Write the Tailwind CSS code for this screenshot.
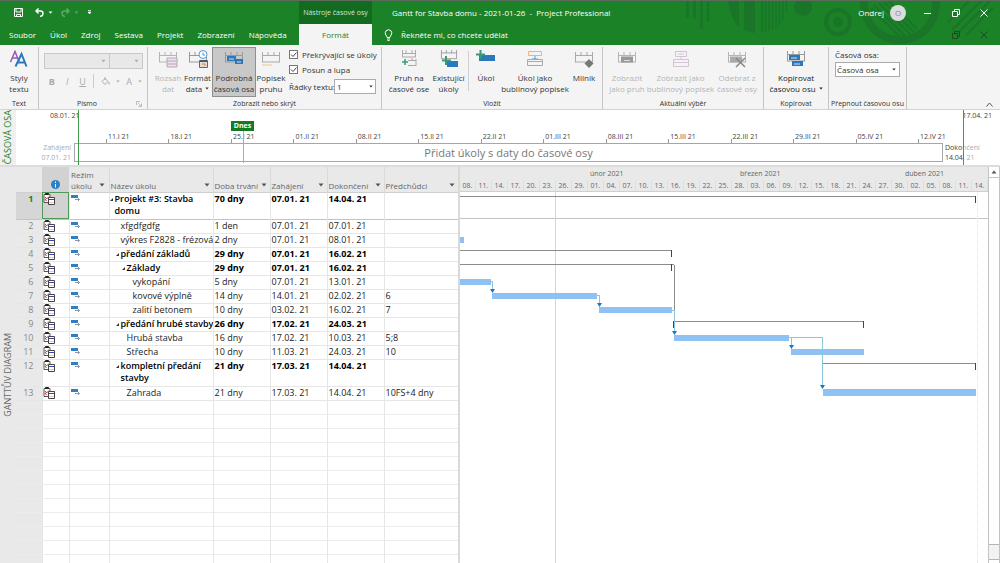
<!DOCTYPE html>
<html lang="cs">
<head>
  <meta charset="UTF-8" />
  <meta name="viewport" content="width=device-width, initial-scale=1.0" />
  <title>Gantt for Stavba domu - 2021-01-26 - Project Professional</title>
  <script src="https://cdn.jsdelivr.net/npm/@tailwindcss/browser@4"></script>
</head>
<body class="h-screen flex flex-col overflow-hidden bg-white font-['Open_Sans',sans-serif] text-[8px] leading-[11px] text-[#333]">

  <!-- shared icons -->
  <svg class="hidden">
    <symbol id="caret" viewBox="0 0 6 4"><path d="M0.5 0.5h5L3 3.5z" fill="currentColor" /></symbol>
    <symbol id="rail" viewBox="0 0 20 18">
      <path d="M1.500 2v10M7 2v4M13 2v4M18.500 2v10M1 5.500h18M1 12h18" fill="none" stroke="currentColor" />
    </symbol>
    <symbol id="indicator" viewBox="0 0 12 12">
      <path d="M1 1.500h6v8H1z" fill="#fff" stroke="#555" />
      <path d="M2.500 0.500h3v1h-3z" fill="#222" stroke="#222" />
      <path d="M2 4l1.500 2L6 3.500M2 6l1.500 2" fill="none" stroke="#c8324a" />
      <path d="M5.500 4.500h6v7h-6z" fill="#fff" stroke="#444" />
      <path d="M6 6.500h5" stroke="#3a44b0" />
      <path d="M6 9.500h5" stroke="#e3c9cc" />
    </symbol>
    <symbol id="mode" viewBox="0 0 10 8">
      <path d="M0 0h7v3H0z" fill="#2f7fc4" />
      <path d="M4 4.500h4.500M7 3l1.500 1.500L7 6" fill="none" stroke="#8c98a8" />
    </symbol>
  </svg>

  <header class="relative bg-[#1b8228] border-t border-[#5d6b5f] text-white">
    <svg class="absolute right-0 top-0 text-[#1a7529]" width="325" height="43" viewBox="0 1 325 43" fill="none" stroke="currentColor">
      <path d="M12.500 1v17M19.500 1v18M26.500 1v28M33 1v20" stroke-width="2.500" />
      <path d="M53 1h11v27Q57 20 55 10zM69 1h11v32Q74 32 69 30z" fill="currentColor" stroke="none" />
      <path d="M87 1v31M90.500 1v31M94 1v30M97.500 1v29M101 1v27M104.500 1v24M108 1v19M111.500 1v12" stroke-width="1.500" />
      <circle cx="128" cy="7" r="9" fill="currentColor" stroke="none" />
      <circle cx="163" cy="22" r="12" stroke-width="4" />
      <circle cx="163" cy="22" r="5" fill="currentColor" stroke="none" />
      <circle cx="225" cy="4" r="36" stroke-width="8" />
      <path d="M196 8l29 29M199 5l31 31M204 3l31 31M209 2l30 30M214 1l28 28" stroke-width="2" />
      <path d="M273 22l21-21M277 30l29-29M283 33l32-32M291 35l27-27" stroke-width="2.500" />
    </svg>

    <div class="relative flex h-[23px] items-center">
      <div class="flex w-[299px] items-center pl-[14px]">
        <button aria-label="Uložit"><svg width="9" height="9" viewBox="0 0 9 9" fill="none" stroke="#fff"><path d="M0.500 0.500h8v8h-8z" /><path d="M2 1v3h5V1M2.500 8.500v-2h4v2" /></svg></button>
        <button aria-label="Zpět" class="ml-3"><svg width="9" height="9" viewBox="0 0 9 9" fill="none" stroke="#fff" stroke-width="1.500"><path d="M3.500 0.500l-2.500 2.500 2.500 2.500M1 3h4.500q2.500 0 2.500 2.500T5 8.500" /></svg></button>
        <svg class="ml-1" width="5" height="3"><use href="#caret" /></svg>
        <button aria-label="Znovu" disabled class="ml-2 opacity-30"><svg width="9" height="9" viewBox="0 0 9 9" fill="none" stroke="#fff" stroke-width="1.500"><path d="M5.500 0.500l2.500 2.500-2.500 2.500M8 3H3.500Q1 3 1 5.500t3 3" /></svg></button>
        <svg class="ml-1 opacity-30" width="5" height="3"><use href="#caret" /></svg>
        <svg class="ml-2" width="5" height="5" viewBox="0 0 5 5"><path d="M1 0.500h3M1 2l1.500 2L4 2z" stroke="#fff" stroke-width=".7" fill="#fff" /></svg>
      </div>
      <div class="flex h-full w-[73px] items-center justify-center bg-[#126b1f] text-[7px] whitespace-nowrap text-[#d5e8d6]">Nástroje časové osy</div>
      <h1 class="ml-5 whitespace-pre">Gantt for Stavba domu - 2021-01-26  -  Project Professional</h1>
      <div class="ml-auto flex items-center pr-3">
        <span>Ondrej</span>
        <span class="ml-[6px] flex h-4 w-4 items-center justify-center rounded-full bg-[#dcdcdc] text-[#888]">O</span>
        <button aria-label="Minimalizovat" class="ml-[18px]"><svg width="8" height="8"><path d="M0 4.500h7" stroke="#fff" /></svg></button>
        <button aria-label="Obnovit" class="ml-5"><svg width="8" height="8" viewBox="0 0 8 8" fill="none" stroke="#fff"><path d="M0.500 2.500h5v5h-5zM2.500 2V0.500h5v5H6" /></svg></button>
        <button aria-label="Zavřít" class="ml-5"><svg width="8" height="8" viewBox="0 0 8 8"><path d="M0.500 0.500l7 7M7.500 0.500l-7 7" stroke="#fff" /></svg></button>
      </div>
    </div>

    <div class="relative flex h-[21px] items-center">
      <nav class="flex w-[299px] pl-[2px] whitespace-nowrap text-white">
        <a href="#" class="px-[7px]">Soubor</a>
        <a href="#" class="px-[7px]">Úkol</a>
        <a href="#" class="px-[7px]">Zdroj</a>
        <a href="#" class="px-[7px]">Sestava</a>
        <a href="#" class="px-[7px]">Projekt</a>
        <a href="#" class="px-[7px]">Zobrazení</a>
        <a href="#" class="px-[7px]">Nápověda</a>
      </nav>
      <a href="#" class="flex h-full w-[73px] items-center justify-center bg-[#f4f4f4] text-[#1b8228]">Formát</a>
      <svg class="ml-3" width="9" height="12" viewBox="0 0 9 12" fill="none" stroke="#fff"><path d="M3 8.500Q3 7 1.800 6 0.500 3.500 2 1.800 4.500 -0.500 7 1.800 8.500 3.500 7.200 6 6 7 6 8.500zM3 10h3M3.500 11.500h2" /></svg>
      <a href="#" class="ml-2">Řekněte mi, co chcete udělat</a>
      <div class="ml-auto flex items-center pr-3 text-[#1d4a24]">
        <button aria-label="Obnovit okno"><svg width="8" height="8" viewBox="0 0 8 8" fill="none" stroke="currentColor"><path d="M0.500 2.500h5v5h-5zM2.500 2V0.500h5v5H6" /></svg></button>
        <button aria-label="Zavřít okno" class="ml-5"><svg width="8" height="8" viewBox="0 0 8 8"><path d="M0.500 0.500l7 7M7.500 0.500l-7 7" stroke="currentColor" /></svg></button>
      </div>
    </div>
  </header>

  <!-- ribbon -->
  <section class="flex h-[65px] border-b border-[#d2d2d2] bg-[#f4f4f4] pt-[2px] whitespace-nowrap">
    <div class="flex w-[39px] flex-col items-center justify-between border-r border-[#c6c6c6]">
      <button class="flex flex-col items-center pt-[3px]">
        <svg class="mb-1" width="20" height="18" viewBox="0 0 20 18" fill="none"><path d="M1.500 12L6 1.500l4 10M3 8h5.500" stroke="#9a55b8" stroke-width="1.500" /><path d="M6.500 16.500L12.500 4l5 12.500M9 12.500h7" stroke="#2b78bd" stroke-width="2" /></svg>
        <span>Styly</span><span>textu</span>
      </button>
      <span class="text-[7px]">Text</span>
    </div>

    <div class="flex w-[109px] flex-col justify-between border-r border-[#c6c6c6] px-[5px] text-[#aaa]">
      <div class="pt-[6px]">
        <div class="flex">
          <span class="relative"><select aria-label="Písmo" disabled class="h-4 w-[66px] appearance-none border border-[#c8c8c8] bg-[#e8e8e8]"><option></option></select><svg class="absolute top-[6px] right-1" width="5" height="4"><use href="#caret" /></svg></span>
          <span class="relative"><select aria-label="Velikost" disabled class="h-4 w-[33px] appearance-none border border-l-0 border-[#c8c8c8] bg-[#e8e8e8]"><option></option></select><svg class="absolute top-[6px] right-1" width="5" height="4"><use href="#caret" /></svg></span>
        </div>
        <div class="mt-[5px] flex items-center text-[9px]">
          <button disabled class="w-4 font-bold">B</button>
          <button disabled class="w-4 italic">I</button>
          <button disabled class="w-4 underline">U</button>
          <span class="mx-[3px] h-[14px] w-px bg-[#ccc]"></span>
          <button disabled aria-label="Barva pozadí" class="ml-1 flex items-center gap-[6px]"><svg width="9" height="9" viewBox="0 0 9 9" fill="none" stroke="currentColor"><path d="M1 4.500L4 1.500l3 3-3 3zM4 0v3M8 5v2.500" /></svg><svg width="4" height="3"><use href="#caret" /></svg></button>
          <button disabled class="ml-[6px] flex items-center gap-[6px]">A<svg width="4" height="3"><use href="#caret" /></svg></button>
        </div>
      </div>
      <div class="relative text-center text-[7px] text-[#333]">
        <span class="pr-3">Písmo</span>
        <svg class="absolute right-0 top-[3px] text-[#bbb]" width="6" height="6" viewBox="0 0 6 6" fill="none" stroke="currentColor"><path d="M0.500 4V0.500H4M2 2l3 3M5.500 2.500v3h-3" /></svg>
      </div>
    </div>

    <div class="flex w-[234px] flex-col justify-between border-r border-[#c6c6c6]">
      <div class="flex pl-[5px]">
        <button disabled class="flex h-[50px] w-[30px] flex-col items-center pt-[3px] text-[#b4b4b4]">
          <svg class="mb-1" width="20" height="18" viewBox="0 0 20 18"><use href="#rail" width="20" height="18" /><path d="M9 8h10v9H9z" fill="#eee0ec" stroke="#b9a6b6" /><path d="M9 11h10M9 14h10" stroke="#b9a6b6" /></svg>
          <span>Rozsah</span><span>dat</span>
        </button>
        <button class="flex h-[50px] w-[29px] flex-col items-center pt-[3px]">
          <svg class="mb-1 text-[#999]" width="20" height="18" viewBox="0 0 20 18"><use href="#rail" width="20" height="18" /><circle cx="15" cy="4.500" r="4" fill="#fff" stroke="#4a9bd8" /><path d="M15 2.500v2.500h2" fill="none" stroke="#4a9bd8" /><path d="M11.500 10.500h8v7h-8z" fill="#ddd" stroke="#666" /><path d="M12 11h7" stroke="#555" stroke-width="2" /><path d="M14 14h3v2" stroke="#e0873a" fill="none" /></svg>
          <span>Formát</span><span class="flex items-center gap-[3px]">data<svg width="4" height="3"><use href="#caret" /></svg></span>
        </button>
        <button class="flex h-[50px] w-[44px] flex-col items-center border border-[#8f8f8f] bg-[#c8c8c8] pt-[2px]">
          <svg class="mb-1 text-[#999]" width="20" height="18" viewBox="0 0 20 18"><use href="#rail" width="20" height="18" /><path d="M3 6h9v5H3zM11 9h8v5h-8z" fill="#2b78bd" /><path d="M5 9h5M13 12h4" stroke="#cfe3f4" /></svg>
          <span>Podrobná</span><span>časová osa</span>
        </button>
        <button class="flex h-[50px] w-[30px] flex-col items-center pt-[3px]">
          <svg class="mb-1 text-[#aaa]" width="20" height="18" viewBox="0 0 20 18"><use href="#rail" width="20" height="18" /><path d="M1 15h10" stroke="#ecc592" /></svg>
          <span>Popisek</span><span>pruhu</span>
        </button>
        <div class="flex flex-col gap-[4px] pt-[2px] pl-[3px]">
          <label class="flex items-center gap-1"><span class="relative h-[9px] w-[9px]"><input type="checkbox" checked class="block h-[9px] w-[9px] appearance-none border border-[#777] bg-white" /><svg class="pointer-events-none absolute top-0 left-0" width="9" height="9"><path d="M2 4.500l2 2 3.500-4" fill="none" stroke="#444" /></svg></span>Překrývající se úkoly</label>
          <label class="flex items-center gap-1"><span class="relative h-[9px] w-[9px]"><input type="checkbox" checked class="block h-[9px] w-[9px] appearance-none border border-[#777] bg-white" /><svg class="pointer-events-none absolute top-0 left-0" width="9" height="9"><path d="M2 4.500l2 2 3.500-4" fill="none" stroke="#444" /></svg></span>Posun a lupa</label>
          <label class="flex items-center">
            <span class="w-[45px]">Řádky textu:</span>
            <span class="relative"><select class="h-[15px] w-[42px] appearance-none border border-[#ababab] bg-white pl-[2px]"><option>1</option></select><svg class="absolute top-[6px] right-[3px]" width="4" height="3"><use href="#caret" /></svg></span>
          </label>
        </div>
      </div>
      <span class="text-center text-[7px]">Zobrazit nebo skrýt</span>
    </div>

    <div class="flex w-[221px] flex-col justify-between border-r border-[#c6c6c6]">
      <div class="flex pl-[7px]">
        <button class="flex w-10 flex-col items-center pt-[3px]">
          <svg class="mb-1 text-[#aaa]" width="18" height="18" viewBox="0 0 18 18" fill="none"><path d="M2.500 0v7M15.500 0v7M6 0v3M12 0v3M2 3.500h14M2 7h14M8 10.500h8M8 15.500h8M16 9v7M12 8v3" stroke="currentColor" /><path d="M5 9v6M2 12h6" stroke="#3a9a76" stroke-width="1.500" /></svg>
          <span>Pruh na</span><span>časové ose</span>
        </button>
        <button class="flex w-[39px] flex-col items-center pt-[3px]">
          <svg class="mb-1 text-[#999]" width="20" height="18" viewBox="0 0 20 18"><use href="#rail" width="20" height="16" y="-2" /><path d="M8 11h11v6H8z" fill="#2b78bd" /><path d="M7 6v9M3 10.500h9" stroke="#3a9a76" stroke-width="2" /></svg>
          <span>Existující</span><span>úkoly</span>
        </button>
        <span class="mt-1 h-10 w-px bg-[#d0d0d0]"></span>
        <button class="flex w-[34px] flex-col items-center pt-[3px]">
          <svg class="mb-1" width="20" height="18" viewBox="0 0 20 18"><path d="M3 5h16v6H3z" fill="#2b78bd" /><path d="M4.500 0v9M0 4.500h9" stroke="#3a9a76" stroke-width="2" /></svg>
          <span>Úkol</span>
        </button>
        <button class="flex w-[64px] flex-col items-center pt-[3px]">
          <svg class="mb-1" width="18" height="18" viewBox="0 0 18 18" fill="none"><path d="M2.500 1.500h13v4h-13z" stroke="#f0b27a" /><path d="M9 6v3M6 9h6" stroke="#4a9bd8" /><path d="M1.500 9.500h15v2h-15zM1.500 11.500h15v4h-15z" stroke="#aaa" /></svg>
          <span>Úkol jako</span><span>bublinový popisek</span>
        </button>
        <button class="flex w-[34px] flex-col items-center pt-[3px]">
          <svg class="mb-1 text-[#aaa]" width="20" height="18" viewBox="0 0 20 18"><use href="#rail" width="20" height="18" /><path d="M15 9l4.500 4.500L15 18l-4.500-4.500z" fill="#777" /></svg>
          <span>Milník</span>
        </button>
      </div>
      <span class="text-center text-[7px]">Vložit</span>
    </div>

    <div class="flex w-[161px] flex-col justify-between border-r border-[#c6c6c6]">
      <div class="flex pl-[5px] text-[#b4b4b4]">
        <button disabled class="flex w-[38px] flex-col items-center pt-[3px]">
          <svg class="mb-1" width="20" height="18" viewBox="0 0 20 18"><use href="#rail" width="20" height="18" /><path d="M4 6.500h12v6H4z" fill="#999" /><path d="M7 10.500h6" stroke="#ddd" /></svg>
          <span>Zobrazit</span><span>jako pruh</span>
        </button>
        <button disabled class="flex w-[69px] flex-col items-center pt-[3px]">
          <svg class="mb-1" width="18" height="18" viewBox="0 0 18 18" fill="none" stroke="#d5c3d5"><path d="M3.500 1.500h11v5h-11zM9 6v4M1.500 9.500h15v7h-15zM1.500 12.500h15M6 4h6" /></svg>
          <span>Zobrazit jako</span><span>bublinový popisek</span>
        </button>
        <button disabled class="flex w-[44px] flex-col items-center pt-[3px]">
          <svg class="mb-1" width="20" height="18" viewBox="0 0 20 18"><use href="#rail" width="20" height="18" /><path d="M3 6.500h12v6H3z" fill="#aaa" /><path d="M9 8l9 9M18 8l-9 9" stroke="#888" stroke-width="1.500" /></svg>
          <span>Odebrat z</span><span>časové osy</span>
        </button>
      </div>
      <span class="text-center text-[7px]">Aktuální výběr</span>
    </div>

    <div class="flex w-[65px] flex-col items-center justify-between border-r border-[#c6c6c6]">
      <button class="flex flex-col items-center pt-[3px] text-[#222]">
        <svg class="mb-1 text-[#999]" width="20" height="18" viewBox="0 0 20 18"><use href="#rail" width="20" height="18" y="-1" /><path d="M3 5h11v5H3zM6 11h11v5H6z" fill="#2b78bd" /><path d="M5 8h6M8 14h6" stroke="#cfe3f4" /></svg>
        <span>Kopírovat</span><span class="flex items-center gap-[3px]">časovou osu<svg width="4" height="3"><use href="#caret" /></svg></span>
      </button>
      <span class="text-[7px]">Kopírovat</span>
    </div>

    <div class="flex w-[78px] flex-col items-center justify-between border-r border-[#c6c6c6]">
      <label class="flex flex-col gap-[2px] pt-[2px]">Časová osa:
        <span class="relative"><select class="h-[15px] w-[65px] appearance-none border border-[#ababab] bg-white pl-[1px]"><option>Časová osa</option></select><svg class="absolute top-[6px] right-1" width="4" height="3"><use href="#caret" /></svg></span>
      </label>
      <span class="text-[7px]">Přepnout časovou osu</span>
    </div>
    <button aria-label="Sbalit pás karet" class="mt-auto ml-auto p-[7px] pb-[2px]"><svg width="7" height="5"><path d="M0.500 4.500l3-3.500 3 3.500" fill="none" stroke="#555" /></svg></button>
  </section>

  <!-- timeline -->
  <section class="flex h-[55px]">
    <div class="flex w-4 items-center justify-center bg-[#f0f0f0]"><h2 class="rotate-180 text-[9px] leading-4 whitespace-nowrap text-[#1b8228] [writing-mode:vertical-rl]">ČASOVÁ OSA</h2></div>
    <div class="relative flex-1 text-[7px] leading-[10px] text-[#444]">
      <div class="flex justify-between pt-px pr-2 pl-[34px]"><span>08.01. 21</span><span>17.04. 21</span></div>
      <div id="weeks" class="mt-[11px] mr-[57px] ml-[58px] grid h-[11px] grid-cols-[32px_repeat(13,1fr)_25px] whitespace-nowrap"><span></span></div>
      <div class="flex">
        <div class="w-[58px] pr-[3px] text-right text-[#aaa]">Zahájení<br />07.01. 21</div>
        <div class="flex h-[19px] flex-1 items-center justify-center border border-[#a6a6a6] text-[11px] leading-4 text-[#777]">Přidat úkoly s daty do časové osy</div>
        <div class="w-[57px] pl-[2px]"><span>Doko</span><span class="text-[#aaa]">nčení</span><br /><span>14.04</span><span class="text-[#aaa]">. 21</span></div>
      </div>
      <span class="absolute top-0 bottom-0 left-[62px] w-px bg-[#3f9a49]"></span>
      <span class="absolute top-0 right-[36px] bottom-0 w-px bg-[#3f9a49]"></span>
      <span class="absolute top-[11px] left-[215px] h-[10px] w-[23px] bg-[#137a22] text-center font-bold text-white">Dnes</span>
      <span class="absolute top-[21px] bottom-[2px] left-[227px] w-px bg-[#8fbf94]"></span>
    </div>
  </section>
  <div class="h-[2px] bg-[#dcdcdc]"></div>

  <!-- task sheet and chart -->
  <main class="flex min-h-0 flex-1">
    <div class="flex w-4 items-center justify-center bg-[#e9e9e9] pt-[20px]"><h2 class="rotate-180 text-[9px] leading-4 whitespace-nowrap text-[#666] [writing-mode:vertical-rl]">GANTTŮV DIAGRAM</h2></div>

    <div class="w-[442px] overflow-hidden">
      <table class="w-full table-fixed border-collapse text-left whitespace-nowrap">
        <colgroup>
          <col class="w-[26px]" /><col class="w-[27px]" /><col class="w-[40px]" /><col class="w-[104px]" /><col class="w-[57px]" /><col class="w-[57px]" /><col class="w-[57px]" /><col />
        </colgroup>
        <thead id="head" class="bg-[#e9e9e9] text-[#666]"></thead>
        <tbody id="tasks" class="text-[9px] text-[#222]"></tbody>
      </table>
    </div>

    <div class="w-[2px] bg-[#d9d9d9]"></div>

    <div class="flex min-w-0 flex-1 flex-col overflow-hidden">
      <div class="h-[25px] border-b border-[#cfcfcf] bg-[#e9e9e9] text-[7px] text-[#666]">
        <div class="flex h-[13px] items-center pl-32">
          <span class="w-[150px] pl-[2px]">únor 2021</span>
          <span class="w-[165px] pl-[2px]">březen 2021</span>
          <span class="pl-[2px]">duben 2021</span>
        </div>
        <div id="days" class="flex h-[11px]"></div>
      </div>
      <svg class="flex-none" width="528" height="371" viewBox="0 0 528 371" fill="none" shape-rendering="crispEdges">
        <path d="M0 26.500h528" stroke="#c4c4c4" />
        <path d="M95.500 0v371" stroke="#cddccd" />
        <path d="M517.500 0v371" stroke="#e2e2e2" stroke-dasharray="1 1" />
        <g fill="#8fc1f2">
          <path d="M0 45h4v6H0zM0 87h31v6H0zM32 101h105v6H32zM139 115h73v6h-73zM214 143h115v6H214zM331 157h73v6h-73zM363 197h153v7H363z" />
        </g>
        <path d="M0 4.500h516M0 58.500h212M0 72.500h214M213 129.500h191M362 171.500h154M214.500 73v46" stroke="#8c8c8c" />
        <path d="M515.500 4v7M211.500 58v7M211.500 72v7M213.500 129v7M403.500 129v7M362.500 171v7M515.500 171v7" stroke="#444" />
        <path d="M31 89.500h1.500v9M137 103.500h2.500v9M212 118.500h2.500v21M329 145.500h33.500v49M331.500 146v9" stroke="#8cc6dd" />
        <path d="M30 97h5l-2.500 4zM137 111h5l-2.500 4zM212 139h5l-2.500 4zM329 153h5l-2.500 4zM360 193h5l-2.500 4z" fill="#1579c8" shape-rendering="auto" />
      </svg>
    </div>

    <div class="flex w-[12px] flex-col border-r border-l border-[#c2c2c2] bg-[#f2f2f2]">
      <button aria-label="Nahoru" class="flex h-[11px] items-center justify-center border-b border-[#c2c2c2] bg-white"><svg class="rotate-180 text-[#555]" width="6" height="4"><use href="#caret" /></svg></button>
      <div class="flex-1 border-b border-[#b5b5b5] bg-white"></div>
      <div class="h-[14px]"></div>
      <div class="h-1 border-t border-[#b5b5b5] bg-white"></div>
    </div>
  </main>

  <script>
    const weeks = ["11.I 21", "18.I 21", "25.I 21", "01.II 21", "08.II 21", "15.II 21", "22.II 21", "01.III 21", "08.III 21", "15.III 21", "22.III 21", "29.III 21", "05.IV 21", "12.IV 21"];
    weeks.forEach(week => {
      document.getElementById("weeks").innerHTML +=
        `<span class="relative w-0 pl-[2px]"><i class="absolute bottom-0 left-0 h-[4px] w-px bg-[#999]"></i>${week}</span>`;
    });

    const days = "08 11 14 17 20 23 26 29 01 04 07 10 13 16 19 22 25 28 03 06 09 12 15 18 21 24 27 30 02 05 08 11 14".split(" ");
    document.getElementById("days").innerHTML = days.map(day =>
      `<span class="w-4 flex-none border-r border-[#dedede] text-center">${day}.</span>`).join("");

    const caret = `<svg class="text-[#555]" width="6" height="4"><use href="#caret" /></svg>`;
    const columns = ["Název úkolu", "Doba trvání", "Zahájení", "Dokončení", "Předchůdci"];
    document.getElementById("head").innerHTML = `
      <tr class="h-[25px] border-b border-[#cfcfcf] align-bottom font-normal">
        <th></th>
        <th aria-label="Indikátory" class="bg-[#d2d2d2]"><svg class="mx-auto mb-[3px]" width="9" height="9"><circle cx="4.500" cy="4.500" r="4.500" fill="#2b80c5" /><path d="M4.500 4v3.500M4.500 1.500v1.500" stroke="#fff" /></svg></th>
        <th class="pb-px pl-[2px] font-normal">Režim<span class="flex items-center justify-between pr-1">úkolu${caret}</span></th>
        ${columns.map(name => `<th class="border-l border-[#dadada] pb-px pl-px font-normal"><span class="flex items-center justify-between pr-[3px]">${name}${caret}</span></th>`).join("")}
      </tr>`;

    // level is the outline depth, summary rows are bold
    const tasks = [
      { name: "Projekt #3:&nbsp;Stavba<br>domu", level: 0, summary: true, row: ["70 dny", "07.01. 21", "14.04. 21", ""] },
      { name: "xfgdfgdfg", level: 1, row: ["1 den", "07.01. 21", "07.01. 21", ""] },
      { name: "výkres F2828 - frézová", level: 1, row: ["2 dny", "07.01. 21", "08.01. 21", ""] },
      { name: "předání základů", level: 1, summary: true, row: ["29 dny", "07.01. 21", "16.02. 21", ""] },
      { name: "Základy", level: 2, summary: true, row: ["29 dny", "07.01. 21", "16.02. 21", ""] },
      { name: "vykopání", level: 3, row: ["5 dny", "07.01. 21", "13.01. 21", ""] },
      { name: "kovové výplně", level: 3, row: ["14 dny", "14.01. 21", "02.02. 21", "6"] },
      { name: "zalití betonem", level: 3, row: ["10 dny", "03.02. 21", "16.02. 21", "7"] },
      { name: "předání hrubé stavby", level: 1, summary: true, row: ["26 dny", "17.02. 21", "24.03. 21", ""] },
      { name: "Hrubá stavba", level: 2, row: ["16 dny", "17.02. 21", "10.03. 21", "5;8"] },
      { name: "Střecha", level: 2, row: ["10 dny", "11.03. 21", "24.03. 21", "10"] },
      { name: "kompletní předání<br>stavby", level: 1, summary: true, row: ["21 dny", "17.03. 21", "14.04. 21", ""] },
      { name: "Zahrada", level: 2, row: ["21 dny", "17.03. 21", "14.04. 21", "10FS+4 dny"] },
    ];

    let rows = "";
    tasks.forEach((task, i) => {
      const first = i === 0;
      rows += `
        <tr class="${task.name.includes("<br>") ? "h-[27px]" : "h-[14px]"} border-b ${first ? "border-[#c4c4c4]" : "border-[#e6e6e6]"} align-top leading-[12px]">
          <td class="pr-2 text-right ${first ? "bg-[#d6d6d6] font-bold text-[#1b8228]" : "bg-[#e9e9e9] text-[#888]"}">${i + 1}</td>
          <td class="${first ? "bg-[#d2d2d2] outline outline-[#4f9a58] -outline-offset-1" : ""} border-l border-[#e6e6e6]"><svg width="12" height="12"><use href="#indicator" /></svg></td>
          <td class="border-l border-[#e6e6e6] pt-[2px] pl-px"><svg width="10" height="8"><use href="#mode" /></svg></td>
          <td class="border-l border-[#e6e6e6] overflow-hidden ${task.summary ? "font-semibold text-black" : ""}">
            <div class="flex" style="padding-left: ${task.level * 6}px"><span class="w-[5px] flex-none">${task.summary ? `<svg class="mt-[5px]" width="3" height="3"><path d="M3 0v3H0z" fill="#333" /></svg>` : ""}</span><span>${task.name}</span></div>
          </td>
          ${task.row.map(value => `<td class="border-l border-[#e6e6e6] pl-px ${task.summary ? "font-bold text-black" : ""}">${value}</td>`).join("")}
        </tr>`;
    });
    // blank rows under the plan
    for (let i = 0; i < 30; i++) {
      rows += `<tr class="h-[14px] border-b border-[#ececec]"><td class="bg-[#e9e9e9]"></td>${`<td class="border-l border-[#e6e6e6]"></td>`.repeat(7)}</tr>`;
    }
    document.getElementById("tasks").innerHTML = rows;
  </script>
</body>
</html>
